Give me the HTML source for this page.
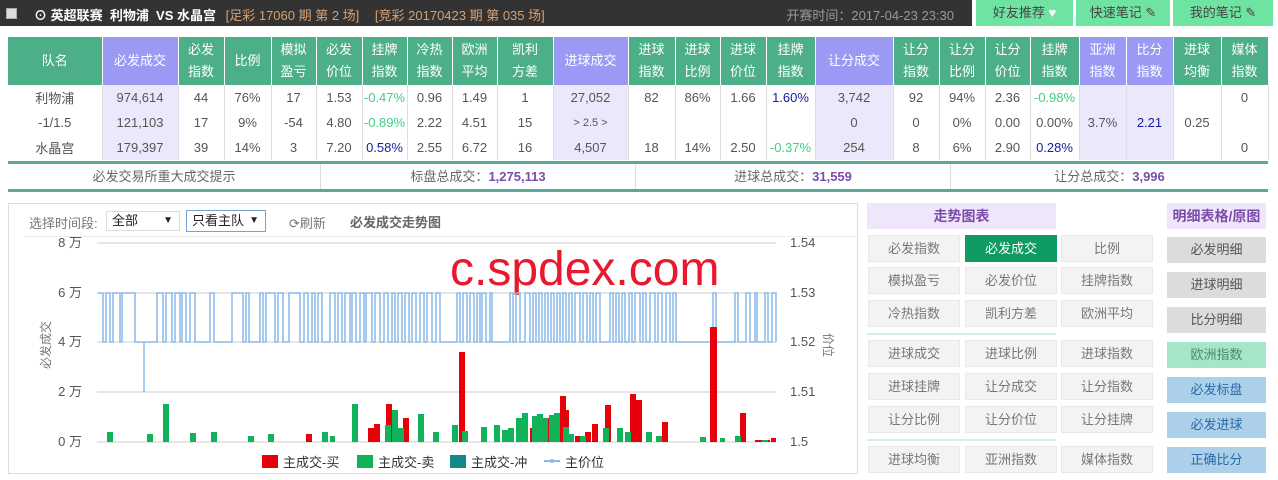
<!DOCTYPE html>
<html><head><meta charset="utf-8"><style>
*{margin:0;padding:0;box-sizing:border-box}
body{width:1278px;height:480px;overflow:hidden;background:#fff;font-family:"Liberation Sans","Noto Sans CJK SC",sans-serif;font-size:13px;color:#555;position:relative}
.top{position:absolute;left:0;top:0;width:972px;height:26px;background:#333;color:#fff}
.top .cb{position:absolute;left:6px;top:8px;width:11px;height:11px;background:#ddd;border:1px solid #aaa}
.top .t{position:absolute;left:34px;top:5px;font-weight:bold;font-size:13px}
.top .o{color:#d9a070;font-weight:normal;margin-left:6px}
.top .tm{position:absolute;right:18px;top:5px;color:#999}
.gb{position:absolute;top:0;height:26px;background:#6fe3a2;color:#444;text-align:center;line-height:26px;font-size:13px}
table{position:absolute;left:8px;top:37px;border-collapse:collapse;table-layout:fixed}
td{text-align:center;border-right:1px solid #ddd;height:25px;font-size:13px;color:#555;padding:0}
tr.h td{background:#4daf88;color:#fff;height:48px;line-height:22px;border-right:1px solid #fff}
tr.h td.p{background:#9a9af5}
td.pl{background:#ece8fb}
.g{color:#3fcf86}.b{color:#1a1aa0}
.sum{position:absolute;left:8px;top:161px;width:1260px;height:31px;border-top:3px solid #5aa896;border-bottom:3px solid #5aa896;display:flex}
.sum div{flex:none;text-align:center;line-height:25px;border-right:1px solid #ddd;color:#666}
.sum b{color:#7a4ca8}
.chart{position:absolute;left:8px;top:203px;width:850px;height:271px;border:1px solid #ddd}
.rp{position:absolute;background:#f3f3f3;border:1px solid #e8e8e8;color:#777;text-align:center;line-height:25px;width:92px;height:27px;font-size:13px}
.rr{position:absolute;left:1167px;width:99px;height:26px;text-align:center;line-height:26px;font-size:13px}
</style></head><body>
<div class="top"><div class="cb"></div><div class="t">⊙ 英超联赛&nbsp; 利物浦&nbsp; VS 水晶宫 <span class="o">[足彩 17060 期 第 2 场]</span> <span class="o" style="margin-left:12px">[竞彩 20170423 期 第 035 场]</span></div><div class="tm">开赛时间：2017-04-23 23:30</div></div>
<div class="gb" style="left:976px;width:97px">好友推荐 <span style="color:#fff">♥</span></div>
<div class="gb" style="left:1076px;width:94px">快速笔记 ✎</div>
<div class="gb" style="left:1173px;width:100px">我的笔记 ✎</div>

<table>
<colgroup><col style="width:94px"><col style="width:76px"><col style="width:46px"><col style="width:47px"><col style="width:45px"><col style="width:46px"><col style="width:45px"><col style="width:45px"><col style="width:45px"><col style="width:56px"><col style="width:75px"><col style="width:47px"><col style="width:45px"><col style="width:46px"><col style="width:49px"><col style="width:78px"><col style="width:46px"><col style="width:46px"><col style="width:45px"><col style="width:49px"><col style="width:47px"><col style="width:47px"><col style="width:48px"><col style="width:47px"></colgroup>
<tr class="h"><td>队名</td><td class="p">必发成交</td><td>必发<br>指数</td><td>比例</td><td>模拟<br>盈亏</td><td>必发<br>价位</td><td>挂牌<br>指数</td><td>冷热<br>指数</td><td>欧洲<br>平均</td><td>凯利<br>方差</td><td class="p">进球成交</td><td>进球<br>指数</td><td>进球<br>比例</td><td>进球<br>价位</td><td>挂牌<br>指数</td><td class="p">让分成交</td><td>让分<br>指数</td><td>让分<br>比例</td><td>让分<br>价位</td><td>挂牌<br>指数</td><td class="p">亚洲<br>指数</td><td class="p">比分<br>指数</td><td>进球<br>均衡</td><td>媒体<br>指数</td></tr>
<tr><td>利物浦</td><td class="pl">974,614</td><td>44</td><td>76%</td><td>17</td><td>1.53</td><td class="g">-0.47%</td><td>0.96</td><td>1.49</td><td>1</td><td class="pl">27,052</td><td>82</td><td>86%</td><td>1.66</td><td class="b">1.60%</td><td class="pl">3,742</td><td>92</td><td>94%</td><td>2.36</td><td class="g">-0.98%</td><td class="pl" rowspan="3">3.7%</td><td class="pl b" rowspan="3">2.21</td><td rowspan="3">0.25</td><td>0</td></tr>
<tr><td>-1/1.5</td><td class="pl">121,103</td><td>17</td><td>9%</td><td>-54</td><td>4.80</td><td class="g">-0.89%</td><td>2.22</td><td>4.51</td><td>15</td><td class="pl" style="font-size:11px">&gt; 2.5 &gt;</td><td></td><td></td><td></td><td></td><td class="pl">0</td><td>0</td><td>0%</td><td>0.00</td><td>0.00%</td><td></td></tr>
<tr><td>水晶宫</td><td class="pl">179,397</td><td>39</td><td>14%</td><td>3</td><td>7.20</td><td class="b">0.58%</td><td>2.55</td><td>6.72</td><td>16</td><td class="pl">4,507</td><td>18</td><td>14%</td><td>2.50</td><td class="g">-0.37%</td><td class="pl">254</td><td>8</td><td>6%</td><td>2.90</td><td class="b">0.28%</td><td>0</td></tr>
</table>
<div class="sum"><div style="width:313px">必发交易所重大成交提示</div><div style="width:315px">标盘总成交：<b>1,275,113</b></div><div style="width:315px">进球总成交：<b>31,559</b></div><div style="width:317px;border:none">让分总成交：<b>3,996</b></div></div>

<div class="chart">
<div style="position:absolute;left:20px;top:9px;color:#777">选择时间段:</div>
<div style="position:absolute;left:97px;top:7px;width:74px;height:20px;border:1px solid #ddd;color:#222;padding-left:5px;line-height:18px">全部<span style="position:absolute;right:6px;font-size:10px">▼</span></div>
<div style="position:absolute;left:177px;top:6px;width:80px;height:22px;border:1px solid #7aa0d8;color:#222;padding-left:5px;line-height:20px">只看主队<span style="position:absolute;right:6px;font-size:10px">▼</span></div>
<div style="position:absolute;left:280px;top:9px;color:#777">⟳刷新</div>
<div style="position:absolute;left:341px;top:8px;color:#666;font-weight:bold">必发成交走势图</div>
<div style="position:absolute;left:15px;top:32px;width:835px;border-top:1px solid #eee"></div>
</div>
<svg style="position:absolute;left:0;top:0" width="860" height="480">
<g stroke="#ccc" stroke-width="1"><line x1="97" y1="243" x2="776" y2="243"/><line x1="97" y1="293" x2="776" y2="293"/><line x1="97" y1="342" x2="776" y2="342"/><line x1="97" y1="392" x2="776" y2="392"/><line x1="97" y1="442" x2="776" y2="442"/></g>
<g font-family="Liberation Sans,Noto Sans CJK SC,sans-serif" font-size="13" fill="#555" text-anchor="end"><text x="82" y="247">8 万</text><text x="82" y="297">6 万</text><text x="82" y="346">4 万</text><text x="82" y="396">2 万</text><text x="82" y="446">0 万</text></g>
<g font-family="Liberation Sans,sans-serif" font-size="13" fill="#555"><text x="790" y="247">1.54</text><text x="790" y="297">1.53</text><text x="790" y="346">1.52</text><text x="790" y="396">1.51</text><text x="790" y="446">1.5</text></g>
<text transform="translate(50,345) rotate(-90)" font-family="Noto Sans CJK SC,sans-serif" font-size="12" fill="#777" text-anchor="middle">必发成交</text>
<text transform="translate(824,345) rotate(90)" font-family="Noto Sans CJK SC,sans-serif" font-size="12" fill="#777" text-anchor="middle">价位</text>
<text x="450" y="285" font-family="Liberation Sans,sans-serif" font-size="48" fill="#e8192c">c.spdex.com</text>
<path fill="none" stroke="#8ab8ea" stroke-width="1.5" d="M98,293 H103 V342 H106 V293 H110 V342 H113 V293 H120 V342 H122 V293 H135 V342 H144 V392 V342 H157 V293 H163 V342 H166 V293 H172 V342 H175 V293 H180 V342 H182 V293 H186 V342 H190 V293 H195 V342 H210 V293 H214 V342 H232 V293 H243 V342 H246 V293 H249 V342 H260 V293 H263 V342 H266 V293 H275 V342 H278 V293 H283 V342 H289 V293 H300 V342 H304 V293 H308 V342 H312 V293 H315 V342 H318 V293 H322 V342 H330 V293 H335 V342 H338 V293 H342 V342 H345 V293 H350 V342 H352 V293 H356 V342 H360 V293 H364 V342 H366 V293 H372 V342 H375 V293 H380 V342 H384 V293 H388 V342 H392 V293 H395 V342 H398 V293 H402 V342 H405 V293 H409 V342 H412 V293 H416 V342 H420 V293 H424 V342 H427 V293 H432 V342 H436 V293 H440 V342 H457 V293 H460 V342 H463 V293 H467 V342 H470 V293 H474 V342 H477 V293 H480 V342 H482 V293 H486 V342 H490 V293 H492 V342 H510 V293 H513 V342 H516 V293 H520 V342 H525 V293 H530 V342 H533 V293 H536 V342 H539 V293 H542 V342 H545 V293 H548 V342 H551 V293 H554 V342 H557 V293 H560 V342 H563 V293 H566 V342 H569 V293 H572 V342 H575 V293 H580 V342 H583 V293 H587 V342 H590 V293 H593 V342 H596 V293 H600 V342 H610 V293 H613 V342 H616 V293 H619 V342 H622 V293 H625 V342 H629 V293 H632 V342 H635 V293 H640 V342 H643 V293 H646 V342 H650 V293 H655 V342 H658 V293 H662 V342 H666 V293 H670 V342 H673 V293 H676 V342 H713 V293 H716 V342 H735 V293 H738 V342 H746 V293 H750 V342 H755 V293 H757 V342 H765 V293 H768 V342 H772 V293 H776 V342"/>
<g fill="#e8000b">
<rect x="306" y="434" width="6" height="8"/><rect x="368" y="428" width="6" height="14"/><rect x="374" y="424" width="6" height="18"/><rect x="386" y="404" width="6" height="38"/><rect x="403" y="418" width="6" height="24"/><rect x="459" y="352" width="6" height="90"/><rect x="530" y="428" width="5" height="14"/><rect x="545" y="418" width="6" height="24"/><rect x="560" y="396" width="6" height="46"/><rect x="564" y="410" width="5" height="32"/><rect x="575" y="436" width="6" height="6"/><rect x="585" y="432" width="6" height="10"/><rect x="592" y="424" width="6" height="18"/><rect x="605" y="405" width="6" height="37"/><rect x="630" y="394" width="6" height="48"/><rect x="636" y="400" width="6" height="42"/><rect x="662" y="422" width="6" height="20"/><rect x="710" y="327" width="7" height="115"/><rect x="740" y="413" width="6" height="29"/><rect x="755" y="440" width="15" height="2"/><rect x="771" y="438" width="5" height="4"/>
</g>
<g fill="#10b25a">
<rect x="107" y="432" width="6" height="10"/><rect x="147" y="434" width="6" height="8"/><rect x="163" y="404" width="6" height="38"/><rect x="190" y="433" width="6" height="9"/><rect x="211" y="432" width="6" height="10"/><rect x="248" y="436" width="6" height="6"/><rect x="268" y="434" width="6" height="8"/><rect x="322" y="432" width="6" height="10"/><rect x="330" y="436" width="5" height="6"/><rect x="352" y="404" width="6" height="38"/><rect x="385" y="425" width="6" height="17"/><rect x="392" y="410" width="6" height="32"/><rect x="398" y="428" width="6" height="14"/><rect x="418" y="414" width="6" height="28"/><rect x="433" y="432" width="6" height="10"/><rect x="452" y="425" width="6" height="17"/><rect x="462" y="431" width="6" height="11"/><rect x="481" y="427" width="6" height="15"/><rect x="494" y="425" width="6" height="17"/><rect x="502" y="430" width="6" height="12"/><rect x="508" y="428" width="6" height="14"/><rect x="516" y="418" width="6" height="24"/><rect x="522" y="413" width="6" height="29"/><rect x="532" y="416" width="6" height="26"/><rect x="537" y="414" width="6" height="28"/><rect x="543" y="418" width="5" height="24"/><rect x="549" y="415" width="6" height="27"/><rect x="554" y="413" width="6" height="29"/><rect x="563" y="427" width="6" height="15"/><rect x="569" y="434" width="5" height="8"/><rect x="580" y="436" width="6" height="6"/><rect x="603" y="428" width="6" height="14"/><rect x="617" y="428" width="6" height="14"/><rect x="625" y="432" width="6" height="10"/><rect x="646" y="432" width="6" height="10"/><rect x="656" y="436" width="6" height="6"/><rect x="700" y="437" width="6" height="5"/><rect x="720" y="438" width="5" height="4"/><rect x="735" y="436" width="6" height="6"/><rect x="762" y="440" width="6" height="2"/>
</g>
<g font-family="Liberation Sans,Noto Sans CJK SC,sans-serif" font-size="13" fill="#333">
<rect x="262" y="455" width="16" height="13" fill="#e8000b"/><text x="283" y="467">主成交-买</text>
<rect x="357" y="455" width="16" height="13" fill="#10b25a"/><text x="378" y="467">主成交-卖</text>
<rect x="450" y="455" width="16" height="13" fill="#128a8a"/><text x="471" y="467">主成交-冲</text>
<line x1="544" y1="461" x2="560" y2="461" stroke="#8ab8ea" stroke-width="2"/><circle cx="552" cy="461" r="2" fill="#8ab8ea"/><text x="565" y="467">主价位</text>
</g>
</svg>

<div style="position:absolute;left:867px;top:203px;width:189px;height:26px;background:#efe6fb;color:#7a4ca8;font-weight:bold;font-size:14px;text-align:center;line-height:26px">走势图表</div>
<div class="rp" style="left:868px;top:235px">必发指数</div><div class="rp" style="left:965px;top:235px;background:#0e9a60;color:#fff;border-color:#0e9a60">必发成交</div><div class="rp" style="left:1061px;top:235px">比例</div>
<div class="rp" style="left:868px;top:267px">模拟盈亏</div><div class="rp" style="left:965px;top:267px">必发价位</div><div class="rp" style="left:1061px;top:267px">挂牌指数</div>
<div class="rp" style="left:868px;top:300px">冷热指数</div><div class="rp" style="left:965px;top:300px">凯利方差</div><div class="rp" style="left:1061px;top:300px">欧洲平均</div>
<div style="position:absolute;left:867px;top:333px;width:189px;height:2px;background:#d6f0df"></div>
<div class="rp" style="left:868px;top:340px">进球成交</div><div class="rp" style="left:965px;top:340px">进球比例</div><div class="rp" style="left:1061px;top:340px">进球指数</div>
<div class="rp" style="left:868px;top:373px">进球挂牌</div><div class="rp" style="left:965px;top:373px">让分成交</div><div class="rp" style="left:1061px;top:373px">让分指数</div>
<div class="rp" style="left:868px;top:406px">让分比例</div><div class="rp" style="left:965px;top:406px">让分价位</div><div class="rp" style="left:1061px;top:406px">让分挂牌</div>
<div style="position:absolute;left:867px;top:439px;width:189px;height:2px;background:#d6f0df"></div>
<div class="rp" style="left:868px;top:446px">进球均衡</div><div class="rp" style="left:965px;top:446px">亚洲指数</div><div class="rp" style="left:1061px;top:446px">媒体指数</div>

<div class="rr" style="top:203px;background:#efe6fb;color:#7a4ca8;font-weight:bold;font-size:14px">明细表格/原图</div>
<div class="rr" style="top:237px;background:#dcdcdc;color:#555">必发明细</div>
<div class="rr" style="top:272px;background:#dcdcdc;color:#555">进球明细</div>
<div class="rr" style="top:307px;background:#dcdcdc;color:#555">比分明细</div>
<div class="rr" style="top:342px;background:#a6e6c6;color:#4a8a6a">欧洲指数</div>
<div class="rr" style="top:377px;background:#acd0ea;color:#2a6aa8">必发标盘</div>
<div class="rr" style="top:412px;background:#acd0ea;color:#2a6aa8">必发进球</div>
<div class="rr" style="top:447px;background:#acd0ea;color:#2a6aa8">正确比分</div>
</body></html>
